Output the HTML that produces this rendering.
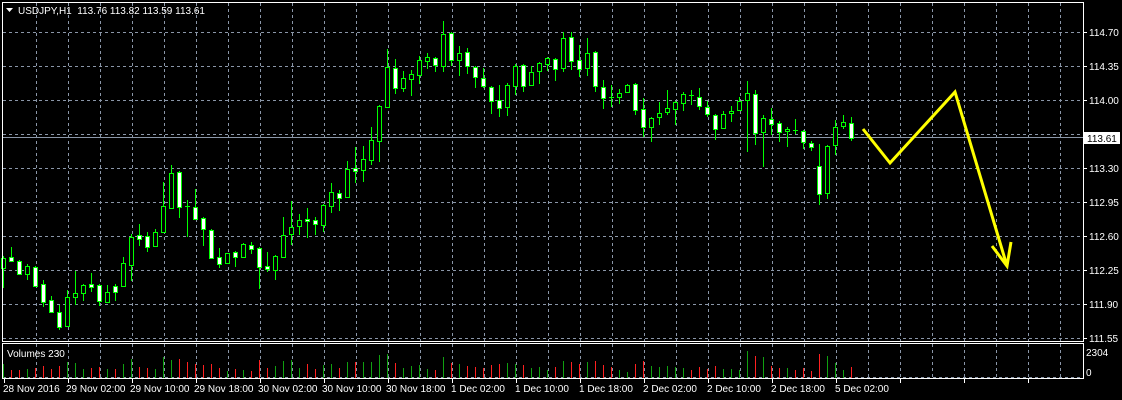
<!DOCTYPE html>
<html><head><meta charset="utf-8"><style>
html,body{margin:0;padding:0;background:#000;width:1122px;height:400px;overflow:hidden}
svg{display:block}
text{font-family:"Liberation Sans",sans-serif;fill:#fff}
</style></head><body>
<svg id="s" width="1122" height="400" xmlns="http://www.w3.org/2000/svg">
<g id="grid"></g>
<line x1="3" y1="137.5" x2="1083" y2="137.5" stroke="#8a96a8" stroke-width="1"/>
<g id="vol"></g>
<g id="cand"></g>
<rect x="2.5" y="2.5" width="1081" height="339" fill="none" stroke="#fff"/>
<rect x="2.5" y="343.5" width="1081" height="35" fill="none" stroke="#fff"/>
<polyline points="863,129 890,163 955,92 1007,266" fill="none" stroke="#ffff00" stroke-width="3" stroke-linejoin="miter"/>
<polyline points="992,246 1007,266 1011,242" fill="none" stroke="#ffff00" stroke-width="3"/>
<path d="M6 8 L13 8 L9.5 12 Z" fill="#fff"/>
<text x="18" y="14" font-size="10" style="white-space:pre">USDJPY,H1  113.76 113.82 113.59 113.61</text>
<text x="7" y="357" font-size="10">Volumes 230</text>
<g font-size="10">
<text x="1089" y="36">114.70</text>
<text x="1089" y="70">114.35</text>
<text x="1089" y="104">114.00</text>
<text x="1089" y="172">113.30</text>
<text x="1089" y="206">112.95</text>
<text x="1089" y="240">112.60</text>
<text x="1089" y="274">112.25</text>
<text x="1089" y="308">111.90</text>
<text x="1089" y="342">111.55</text>
<text x="1086" y="356">2304</text>
<text x="1086" y="376">0</text>
</g>
<rect x="1084" y="132" width="36" height="12" fill="#fff"/>
<text x="1087" y="142" font-size="10" style="fill:#000">113.61</text>
<g font-size="10">
<text x="3" y="392">28 Nov 2016</text>
<text x="66" y="392">29 Nov 02:00</text>
<text x="130" y="392">29 Nov 10:00</text>
<text x="194" y="392">29 Nov 18:00</text>
<text x="258" y="392">30 Nov 02:00</text>
<text x="322" y="392">30 Nov 10:00</text>
<text x="386" y="392">30 Nov 18:00</text>
<text x="451" y="392">1 Dec 02:00</text>
<text x="515" y="392">1 Dec 10:00</text>
<text x="579" y="392">1 Dec 18:00</text>
<text x="643" y="392">2 Dec 02:00</text>
<text x="707" y="392">2 Dec 10:00</text>
<text x="771" y="392">2 Dec 18:00</text>
<text x="835" y="392">5 Dec 02:00</text>
</g>
</svg>
<script>
var NS="http://www.w3.org/2000/svg";
function el(p,t,a){var e=document.createElementNS(NS,t);for(var k in a)e.setAttribute(k,a[k]);p.appendChild(e);return e;}
var g=document.getElementById('grid');
for(var x=36;x<1083;x+=32){var w=((x-52)%192===0);
 el(g,'line',{x1:x+.5,y1:3,x2:x+.5,y2:341,stroke:w?'#fff':'#8a96a8','stroke-dasharray':'3,3'});
 el(g,'line',{x1:x+.5,y1:344,x2:x+.5,y2:378,stroke:w?'#fff':'#8a96a8','stroke-dasharray':'3,3'});}
for(var y=32;y<=338;y+=34)el(g,'line',{x1:3,y1:y+.5,x2:1083,y2:y+.5,stroke:'#8a96a8','stroke-dasharray':'3,3'});
el(g,'line',{x1:3,y1:377.5,x2:1083,y2:377.5,stroke:'#8a96a8','stroke-dasharray':'3,3'});
for(var x=4;x<1083;x+=64)el(g,'line',{x1:x+.5,y1:379,x2:x+.5,y2:383,stroke:'#fff'});
for(var y=32;y<=338;y+=34)el(g,'line',{x1:1083,y1:y+.5,x2:1087,y2:y+.5,stroke:'#fff'});
var D=[[258,268,256,288,0],[257,261,247,262,1],[261,274,260,275,1],[266,274,264,280,0],[267,286,266,287,1],[284,302,280,307,1],[300,312,296,313,1],[312,327,305,330,1],[297,326,290,327,0],[293,297,271,305,0],[285,293,284,301,0],[284,287,273,292,1],[285,301,284,306,1],[292,302,285,303,0],[286,292,284,301,1],[263,286,257,287,0],[237,265,234,281,0],[235,239,224,246,1],[236,247,232,252,1],[232,246,229,247,0],[206,232,182,233,0],[173,208,165,209,0],[172,207,171,218,1],[206,207,200,237,1],[207,219,189,220,1],[218,229,217,246,1],[230,258,229,259,1],[257,264,248,268,1],
[253,263,253,264,0],[252,257,251,267,1],[244,257,243,258,0],[245,249,242,254,1],[248,267,247,289,1],[266,269,252,272,1],[256,270,255,280,0],[235,257,217,258,0],[227,234,201,245,0],[220,226,214,235,0],[219,221,208,238,1],[220,224,217,235,1],[205,225,204,232,0],[192,206,183,213,0],[193,198,190,211,1],[169,197,161,198,0],[168,171,147,183,1],[159,170,146,182,0],[140,160,127,165,0],[106,141,105,162,0],[67,107,49,108,0],[68,88,59,94,1],[78,88,71,92,0],[74,79,70,96,0],[60,75,56,84,0],[57,61,53,69,0],[58,65,57,72,1],
[34,66,21,72,0],[33,60,32,66,1],[53,60,46,76,0],[52,66,48,74,1],[67,77,66,88,1],[78,86,68,88,1],[87,101,86,114,1],[100,108,85,117,1],[85,107,83,116,0],[66,86,64,95,0],[65,86,64,92,1],[72,85,66,86,0],[63,71,62,84,0],[58,64,57,71,0],[59,69,58,81,1],[38,68,32,72,0],[37,61,32,70,1],[60,69,45,77,1],[53,68,38,76,0],[52,86,51,92,1],[87,98,80,109,1],[97,98,85,107,1],[93,97,89,104,0],[85,92,84,93,0],[84,110,83,115,1],
[109,127,98,137,1],[118,127,117,142,0],[113,117,102,125,0],[108,112,90,115,0],[102,109,101,125,0],[94,103,92,111,0],[95,96,90,105,1],[97,106,88,110,1],[107,114,101,117,1],[115,129,114,140,1],[114,128,111,129,0],[111,113,106,122,0],[101,110,97,111,0],[93,100,81,152,0],[94,133,90,145,1],[118,132,115,167,0],[119,124,108,135,1],[123,132,121,142,1],[129,131,127,147,0],[130,131,119,134,1],[131,142,130,149,1],[143,147,141,151,1],[166,194,144,205,1],[146,193,145,199,0],[127,145,120,155,0],[122,126,115,129,0],[123,138,117,141,1]];
var c=document.getElementById('cand'),v=document.getElementById('vol');
D.forEach(function(d,i){var x=3+8*i;
 el(c,'line',{x1:x+.5,y1:d[2],x2:x+.5,y2:d[3],stroke:'#00ff00'});
 var h=Math.max(d[1]-d[0],1);
 if(h<=1)el(c,'line',{x1:x-2,y1:d[0]+.5,x2:x+3,y2:d[0]+.5,stroke:'#00ff00'});
 else el(c,'rect',{x:x-1.5,y:d[0]+.5,width:4,height:h,fill:d[4]?'#fff':'#000',stroke:'#00ff00'});
 var vh=Math.min(27,3+Math.round((d[3]-d[2])*0.35));
 el(v,'line',{x1:x+.5,y1:378-vh,x2:x+.5,y2:378,stroke:d[4]?'#ff2020':'#10a010'});
});
</script>
</body></html>
